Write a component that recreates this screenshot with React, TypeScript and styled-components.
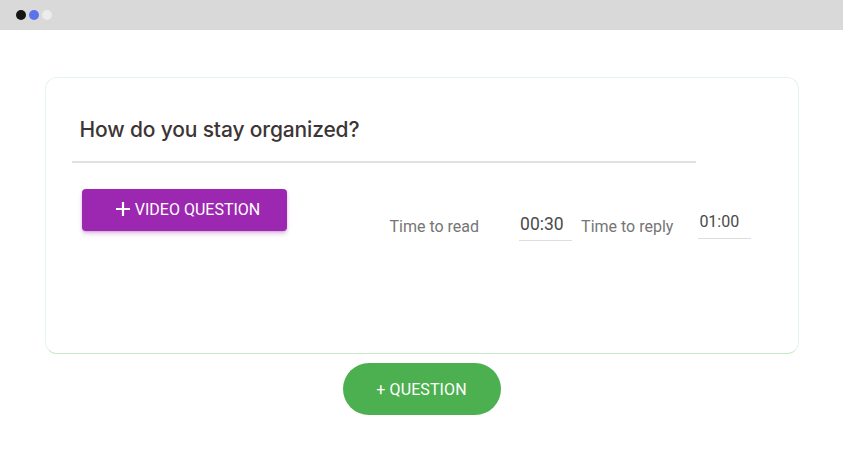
import React from "react";
import styled, { createGlobalStyle } from "styled-components";

const Global = createGlobalStyle`
  html, body { margin: 0; padding: 0; background: #ffffff; }
  body { width: 843px; height: 450px; overflow: hidden; font-family: Roboto, "Liberation Sans", sans-serif; }
`;

const Page = styled.div`
  width: 843px;
  height: 450px;
  display: flex;
  flex-direction: column;
`;

const TopBar = styled.div`
  height: 30px;
  background: #d9d9d9;
  display: flex;
  align-items: center;
  padding-left: 16px;
  gap: 3px;
  box-sizing: border-box;
`;

const Dot = styled.span<{ $c: string }>`
  width: 10px;
  height: 10px;
  border-radius: 50%;
  background: ${(p) => p.$c};
`;

const Body = styled.div`
  display: flex;
  flex-direction: column;
  align-items: center;
  padding-top: 47px;
`;

const Card = styled.div`
  width: 754px;
  height: 277px;
  box-sizing: border-box;
  border: 1px solid #e6f5e8;
  border-bottom-color: #c4e9c6;
  border-radius: 12px;
  padding: 27px 0 0 26px;
  display: flex;
  flex-direction: column;
`;

const TitleField = styled.div`
  width: 624px;
  border-bottom: 2px solid #e0e0e0;
  padding: 11px 0 17px 8px;
  box-sizing: border-box;
`;

const Title = styled.div`
  font-family: Inter, "Noto Sans", sans-serif;
  font-size: 21px;
  font-weight: 500;
  color: #3d3535;
  letter-spacing: -0.15px;
  line-height: 28px;
`;

const Row = styled.div`
  display: flex;
  align-items: flex-start;
  margin-top: 26px;
  padding-left: 10px;
`;

const VideoButton = styled.button`
  width: 205px;
  height: 42px;
  border: none;
  border-radius: 4px;
  background: #9c27b0;
  color: #ffffff;
  font-family: Roboto, sans-serif;
  font-size: 16px;
  font-weight: 400;
  display: flex;
  align-items: center;
  justify-content: center;
  gap: 4px;
  box-shadow: 0 3px 4px rgba(156, 39, 176, 0.25), 0 1px 2px rgba(0, 0, 0, 0.15);
  padding: 0 0 2px 7px;
`;

const Times = styled.div`
  display: flex;
  align-items: flex-start;
  margin-left: 103px;
  margin-top: 18px;
`;

const Label = styled.span<{ $ml?: number }>`
  font-size: 16px;
  color: #757575;
  margin-left: ${(p) => p.$ml ?? 0}px;
  margin-top: 10px;
  line-height: 20px;
`;

const TimeInput = styled.div<{ $ml: number; $w: number; $top: number; $fs: number }>`
  margin-left: ${(p) => p.$ml}px;
  width: ${(p) => p.$w}px;
  padding: ${(p) => p.$top}px 0 6px 1px;
  border-bottom: 1px solid #dedede;
  font-size: ${(p) => p.$fs}px;
  color: #4a4a4a;
  line-height: 20px;
  box-sizing: border-box;
`;

const QuestionButton = styled.button`
  margin-top: 9px;
  width: 158px;
  height: 52px;
  border: none;
  border-radius: 26px;
  background: #4caf50;
  color: #ffffff;
  font-family: Roboto, sans-serif;
  font-size: 16px;
  font-weight: 400;
  letter-spacing: 0.1px;
`;

const Plus = () => (
  <svg width="16" height="16" viewBox="0 0 16 16">
    <path d="M8 1v14M1 8h14" stroke="#fff" strokeWidth="2.2" />
  </svg>
);

export default function App() {
  return (
    <Page>
      <Global />
      <TopBar>
        <Dot $c="#151515" />
        <Dot $c="#5b72ee" />
        <Dot $c="#ececec" />
      </TopBar>
      <Body>
        <Card>
          <TitleField>
            <Title>How do you stay organized?</Title>
          </TitleField>
          <Row>
            <VideoButton>
              <Plus />
              VIDEO QUESTION
            </VideoButton>
            <Times>
              <Label>Time to read</Label>
              <TimeInput $ml={40} $w={53} $top={7} $fs={17.5}>00:30</TimeInput>
              <Label $ml={9}>Time to reply</Label>
              <TimeInput $ml={25} $w={53} $top={5} $fs={16}>01:00</TimeInput>
            </Times>
          </Row>
        </Card>
        <QuestionButton>+ QUESTION</QuestionButton>
      </Body>
    </Page>
  );
}
